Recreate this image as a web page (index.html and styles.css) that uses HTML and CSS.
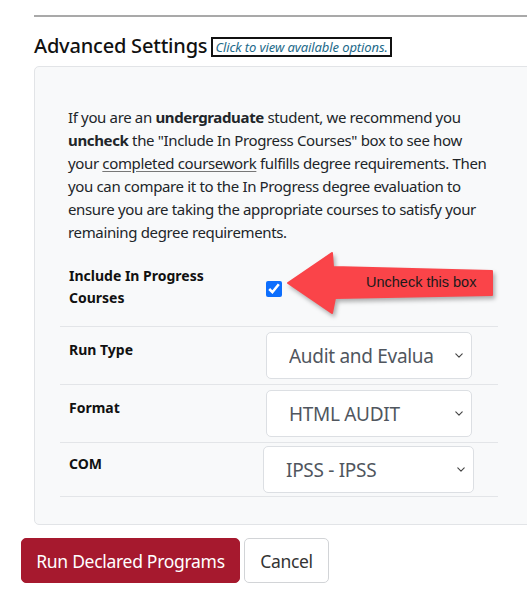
FILE: index.html
```html
<!DOCTYPE html>
<html lang="en">
<head>
<meta charset="utf-8">
<title>Advanced Settings</title>
<link rel="stylesheet" href="styles.css">
</head>
<body>
<div class="page">
  <hr class="rule">
  <h2 class="title">Advanced Settings <a class="opts" href="#">Click to view available options.</a></h2>
  <div class="panel">
    <p class="note">If you are an <b>undergraduate</b> student, we recommend you <b>uncheck</b> the "Include In Progress Courses" box to see how your <u>completed coursework</u> fulfills degree requirements. Then you can compare it to the In Progress degree evaluation to ensure you are taking the appropriate courses to satisfy your remaining degree requirements.</p>
    <table class="settings">
      <tr class="row-include">
        <th>Include In Progress<br>Courses</th>
        <td class="include">
          <input type="checkbox" class="check" checked>
          <div class="callout">
            <svg class="arrow" width="214" height="70" viewBox="0 0 214 70">
              <polygon points="3,33 47,3 48,17 207,21 207,45 50,48 47,63" fill="#fa4449" stroke="#fa4449" stroke-width="2" stroke-linejoin="round"/>
            </svg>
            <span class="callout-text">Uncheck this box</span>
          </div>
        </td>
      </tr>
      <tr class="row-select">
        <th>Run Type</th>
        <td><select class="field"><option>Audit and Evaluation</option></select></td>
      </tr>
      <tr class="row-select">
        <th>Format</th>
        <td><select class="field"><option>HTML AUDIT</option></select></td>
      </tr>
      <tr class="row-com">
        <th>COM</th>
        <td><select class="field field-wide"><option>IPSS - IPSS</option></select></td>
      </tr>
    </table>
  </div>
</div>
<div class="actions">
  <button class="btn btn-primary">Run Declared Programs</button>
  <button class="btn btn-plain">Cancel</button>
</div>
</body>
</html>
```
FILE: styles.css
```css
html, body {
  margin: 0;
  padding: 0;
  background: #ffffff;
  overflow: hidden;
}
body {
  font-family: "Noto Sans", "Open Sans", sans-serif;
  color: #212529;
  width: 527px;
}
.page {
  padding-left: 34px;
  width: 560px;
  padding-top: 15px;
}
.rule {
  margin: 0;
  border: 0;
  border-top: 2px solid #a9a9a9;
}
.title {
  margin: 9px 0 0 0;
  font-size: 20px;
  font-weight: 500;
  letter-spacing: -0.2px;
  line-height: 30px;
  height: 40px;
  color: #111;
  display: flex;
  align-items: center;
  gap: 4px;
}
.opts {
  font-size: 13px;
  font-style: italic;
  font-weight: 400;
  color: #1d6a8a;
  text-decoration: none;
  border: 2px solid #111;
  padding: 0 2px;
  line-height: 16px;
  letter-spacing: -0.1px;
  margin-top: 2px;
}
.panel {
  background: #f8f9fa;
  border: 1px solid #e2e4e7;
  border-radius: 5px;
  padding: 39px 0 27px 25px;
}
.note {
  margin: 0 0 14px 8px;
  width: 424px;
  font-size: 15px;
  line-height: 23px;
  letter-spacing: -0.35px;
}
.note b {
  font-weight: 700;
}
.note u {
  text-decoration-color: #777;
  text-underline-offset: 2px;
}
.settings {
  width: 438px;
  border-collapse: collapse;
}
.settings th {
  text-align: left;
  font-size: 14px;
  font-weight: 700;
  line-height: 22px;
  width: 197px;
  padding: 12px 0 0 9px;
  vertical-align: top;
  color: #111;
}
.settings td {
  padding: 5px 0;
  vertical-align: top;
}
.settings tr {
  border-bottom: 1px solid #e3e5e8;
}
.row-include th {
  padding-top: 7px;
  height: 61px;
}
.settings td.include {
  position: relative;
  padding-top: 23px;
}
.check {
  width: 16px;
  height: 16px;
  margin: 0;
  accent-color: #0d6efd;
  display: block;
}
.callout {
  position: absolute;
  left: 19px;
  top: -8px;
  width: 214px;
  height: 70px;
}
.arrow {
  display: block;
  filter: drop-shadow(2px 3px 2px rgba(0, 0, 0, 0.3));
}
.callout-text {
  position: absolute;
  left: 81px;
  top: 24px;
  font-family: "Liberation Sans", Arial, sans-serif;
  font-size: 14.5px;
  color: #1a1a1a;
  white-space: nowrap;
}
.field {
  appearance: none;
  -webkit-appearance: none;
  display: block;
  width: 206px;
  height: 47px;
  margin: 0;
  padding: 0 37px 0 22px;
  border: 1px solid #dcdfe3;
  border-radius: 5px;
  background-color: #fff;
  background-image: url("data:image/svg+xml,%3Csvg xmlns='http://www.w3.org/2000/svg' viewBox='0 0 10 6'%3E%3Cpath d='M1 1l4 4 4-4' fill='none' stroke='%23444' stroke-width='1.4' stroke-linecap='round' stroke-linejoin='round'/%3E%3C/svg%3E");
  background-repeat: no-repeat;
  background-position: right 8px center;
  background-size: 8px 5px;
  font-family: "Noto Sans", "Open Sans", sans-serif;
  font-size: 19px;
  letter-spacing: -0.3px;
  color: #50565e;
}
.row-com th {
  padding-top: 10px;
}
.row-com td {
  padding: 3px 0;
}
.field-wide {
  width: 211px;
  margin-left: -3px;
}
.actions {
  display: flex;
  gap: 4px;
  padding: 13px 0 0 21px;
}
.btn {
  height: 45px;
  border-radius: 5px;
  font-family: "Noto Sans", "Open Sans", sans-serif;
  font-size: 17.5px;
  letter-spacing: -0.3px;
  padding: 0;
  white-space: nowrap;
  cursor: pointer;
}
.btn-primary {
  background: #a6192e;
  color: #fff;
  border: 1px solid #a6192e;
  width: 219px;
}
.btn-plain {
  background: #fff;
  color: #333;
  border: 1px solid #d2d4d7;
  width: 85px;
}
```
